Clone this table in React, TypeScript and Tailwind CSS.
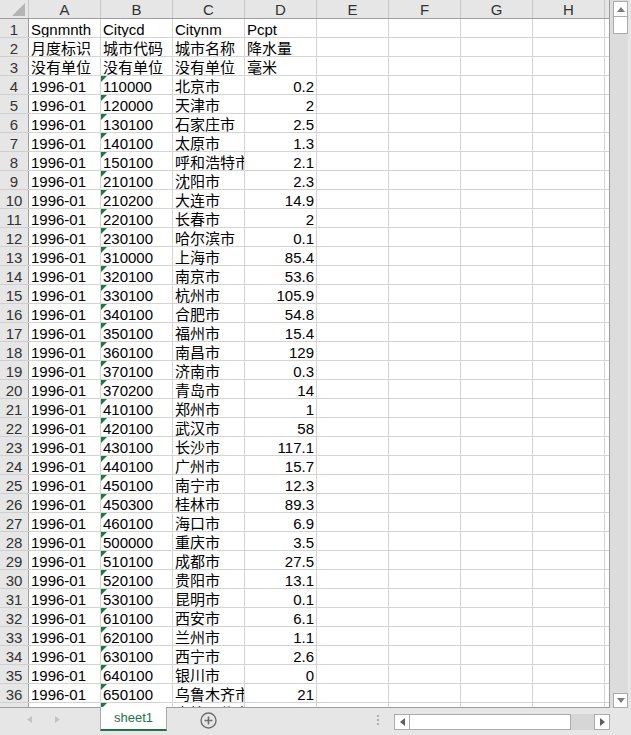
import React from "react";

const rows: [string, string, string, string][] = [
  ["Sgnmnth", "Citycd", "Citynm", "Pcpt"],
  ["月度标识", "城市代码", "城市名称", "降水量"],
  ["没有单位", "没有单位", "没有单位", "毫米"],
  ["1996-01", "110000", "北京市", "0.2"],
  ["1996-01", "120000", "天津市", "2"],
  ["1996-01", "130100", "石家庄市", "2.5"],
  ["1996-01", "140100", "太原市", "1.3"],
  ["1996-01", "150100", "呼和浩特市", "2.1"],
  ["1996-01", "210100", "沈阳市", "2.3"],
  ["1996-01", "210200", "大连市", "14.9"],
  ["1996-01", "220100", "长春市", "2"],
  ["1996-01", "230100", "哈尔滨市", "0.1"],
  ["1996-01", "310000", "上海市", "85.4"],
  ["1996-01", "320100", "南京市", "53.6"],
  ["1996-01", "330100", "杭州市", "105.9"],
  ["1996-01", "340100", "合肥市", "54.8"],
  ["1996-01", "350100", "福州市", "15.4"],
  ["1996-01", "360100", "南昌市", "129"],
  ["1996-01", "370100", "济南市", "0.3"],
  ["1996-01", "370200", "青岛市", "14"],
  ["1996-01", "410100", "郑州市", "1"],
  ["1996-01", "420100", "武汉市", "58"],
  ["1996-01", "430100", "长沙市", "117.1"],
  ["1996-01", "440100", "广州市", "15.7"],
  ["1996-01", "450100", "南宁市", "12.3"],
  ["1996-01", "450300", "桂林市", "89.3"],
  ["1996-01", "460100", "海口市", "6.9"],
  ["1996-01", "500000", "重庆市", "3.5"],
  ["1996-01", "510100", "成都市", "27.5"],
  ["1996-01", "520100", "贵阳市", "13.1"],
  ["1996-01", "530100", "昆明市", "0.1"],
  ["1996-01", "610100", "西安市", "6.1"],
  ["1996-01", "620100", "兰州市", "1.1"],
  ["1996-01", "630100", "西宁市", "2.6"],
  ["1996-01", "640100", "银川市", "0"],
  ["1996-01", "650100", "乌鲁木齐市", "21"],
  // only the top few pixels of this row show
  ["", "", "克拉玛依市", ""],
];

const letters = ["A", "B", "C", "D", "E", "F", "G", "H"];

function Cell({
  text,
  right,
  flag,
}: {
  text?: string;
  right?: boolean;
  flag?: boolean;
}) {
  return (
    <div
      className={`relative w-[72px] shrink-0 h-full border-r border-[#d4d4d4] overflow-hidden whitespace-nowrap pt-[2px] leading-[17px] ${
        right ? "text-right pr-[2px]" : "pl-[2px]"
      }`}
    >
      {/* number-stored-as-text marker */}
      {flag && (
        <svg className="absolute left-0 top-0" width="6" height="6" viewBox="0 0 6 6">
          <polygon points="0,0 6,0 0,6" fill="#1d7a3e" />
        </svg>
      )}
      {text}
    </div>
  );
}

export default function App() {
  return (
    <div className="w-[631px] h-[735px] flex flex-col bg-[#e6e6e6] text-[15px] text-black font-['Liberation_Sans','Noto_Sans_CJK_SC',sans-serif] overflow-hidden">
      <div className="flex h-[708px] shrink-0">
        {/* Sheet grid */}
        <div className="w-[610px] shrink-0 h-[708px] bg-white border-r border-b border-[#9e9e9e] overflow-hidden">
          {/* Column headers */}
          <div className="flex h-[19px] bg-[#e6e6e6] border-b border-[#9e9e9e] text-[#333]">
            <div className="w-[29px] shrink-0 border-r border-[#c8c8c8] relative">
              <svg className="absolute left-[12px] top-[3px]" width="13" height="13" viewBox="0 0 13 13">
                <polygon points="13,0 13,13 0,13" fill="#b4b4b4" />
              </svg>
            </div>
            {letters.map((l) => (
              <div
                key={l}
                className="w-[72px] shrink-0 border-r border-[#c8c8c8] text-center pt-[1px] leading-[17px]"
              >
                {l}
              </div>
            ))}
            <div className="flex-1" />
          </div>

          {/* Rows */}
          {rows.map((r, i) => {
            const data = i >= 3;
            const last = i === rows.length - 1;
            return (
              <div key={i} className="flex h-[19px] border-b border-[#d4d4d4]">
                <div className="w-[29px] shrink-0 bg-[#e6e6e6] border-r border-[#9e9e9e] text-center text-[#333] pt-[2px] leading-[17px] relative">
                  <div className="absolute left-0 right-0 -bottom-px h-px bg-[#cfcfcf]" />
                  {last ? "" : i + 1}
                </div>
                <Cell text={r[0]} />
                <Cell text={r[1]} flag={data} />
                <Cell text={r[2]} />
                <Cell text={r[3]} right={data} />
                <Cell />
                <Cell />
                <Cell />
                <Cell />
                <div className="flex-1" />
              </div>
            );
          })}
        </div>

        {/* Vertical scrollbar */}
        <div className="flex-1 flex pr-[3px]">
          <div className="flex-1 bg-[#dcdcdc] flex flex-col pl-[3px] pt-px">
            <div className="h-[16px] border border-[#ababab] bg-white flex items-center justify-center">
              <svg width="8" height="5" viewBox="0 0 8 5">
                <polygon points="4,0 8,5 0,5" fill="#7d7d7d" />
              </svg>
            </div>
            <div className="h-[17px] border border-[#ababab] border-t-0 bg-white" />
            <div className="flex-1" />
            <div className="h-[15px] border border-[#ababab] bg-white flex items-center justify-center">
              <svg width="8" height="5" viewBox="0 0 8 5">
                <polygon points="0,0 8,0 4,5" fill="#7d7d7d" />
              </svg>
            </div>
          </div>
        </div>
      </div>

      {/* Sheet tabs bar */}
      <div className="flex-1 flex items-start">
        <div className="w-[100px] shrink-0 h-[22px] flex items-center pl-[27px] gap-[23px]">
          <svg width="5" height="7" viewBox="0 0 5 7">
            <polygon points="5,0 5,7 0,3.5" fill="#c3c3c3" />
          </svg>
          <svg width="5" height="7" viewBox="0 0 5 7">
            <polygon points="0,0 5,3.5 0,7" fill="#c3c3c3" />
          </svg>
        </div>
        <div className="w-[67px] shrink-0 h-[24px] -mt-px relative z-10 bg-white border-x border-[#ababab] border-b-2 border-b-[#217346] text-[13px] text-[#217346] text-center pt-px leading-[20px]">
          sheet1
        </div>
        <div className="ml-[33px] mt-[4px] shrink-0">
          <svg width="17" height="17" viewBox="0 0 17 17">
            <circle cx="8.5" cy="8.5" r="7.5" fill="none" stroke="#6e6e6e" strokeWidth="1.4" />
            <path d="M8.5 4.5v8M4.5 8.5h8" stroke="#6e6e6e" strokeWidth="1.6" />
          </svg>
        </div>
        <div className="flex-1" />
        <div className="flex flex-col gap-[2px] mt-[7px] mr-[15px]">
          <div className="w-[2px] h-[2px] bg-[#b0b0b0]" />
          <div className="w-[2px] h-[2px] bg-[#b0b0b0]" />
          <div className="w-[2px] h-[2px] bg-[#b0b0b0]" />
        </div>
        {/* Horizontal scrollbar */}
        <div className="mt-[6px] w-[216px] h-[16px] flex mr-[21px]">
          <div className="w-[16px] border border-[#ababab] bg-white flex items-center justify-center">
            <svg width="5" height="8" viewBox="0 0 5 8">
              <polygon points="5,0 5,8 0,4" fill="#5f5f5f" />
            </svg>
          </div>
          <div className="w-[161px] border border-l-0 border-[#ababab] bg-white" />
          <div className="flex-1 bg-[#d6d6d6]" />
          <div className="w-[16px] border border-[#ababab] bg-white flex items-center justify-center">
            <svg width="5" height="8" viewBox="0 0 5 8">
              <polygon points="0,0 5,4 0,8" fill="#5f5f5f" />
            </svg>
          </div>
        </div>
      </div>
    </div>
  );
}
